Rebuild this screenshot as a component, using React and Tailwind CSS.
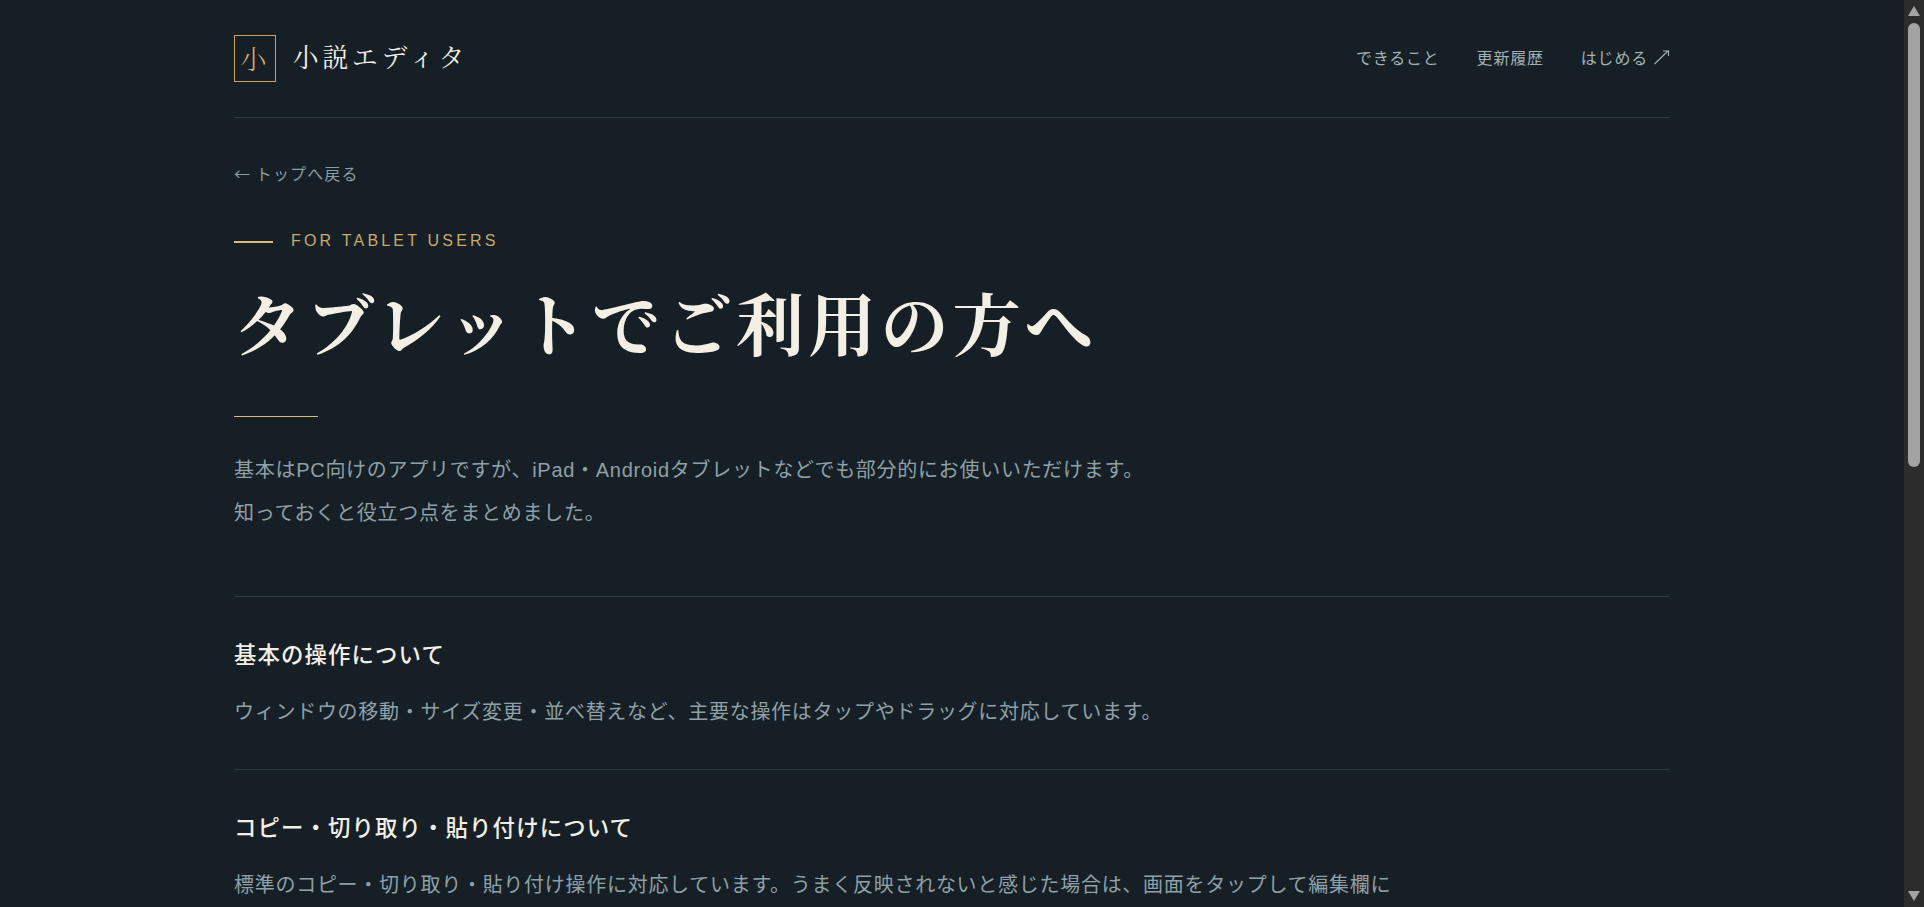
import React from 'react';

const sans = 'font-["Noto_Sans_CJK_JP","Noto_Sans_CJK_SC",sans-serif]';
const serif = 'font-["Noto_Serif_CJK_JP","Noto_Sans_CJK_JP",serif]';
const body = 'font-["Liberation_Sans","Noto_Sans_CJK_JP",sans-serif]';

const sections = [
  {
    title: '基本の操作について',
    body: 'ウィンドウの移動・サイズ変更・並べ替えなど、主要な操作はタップやドラッグに対応しています。',
  },
  {
    title: 'コピー・切り取り・貼り付けについて',
    body: '標準のコピー・切り取り・貼り付け操作に対応しています。うまく反映されないと感じた場合は、画面をタップして編集欄に',
  },
];

const Scrollbar = () => (
  <div className="w-5 shrink-0 h-full bg-[#2c2c2c] flex flex-col items-center pt-[6px] pb-[6px]">
    <div className="w-0 h-0 border-l-[6px] border-r-[6px] border-b-[10px] border-l-transparent border-r-transparent border-b-[#a3a3a3]" />
    <div className="w-3 h-[444px] mt-[7px] bg-[#a3a3a3] rounded-t-[6px] rounded-b-[6px]" />
    <div className="w-0 h-0 mt-auto border-l-[6px] border-r-[6px] border-t-[10px] border-l-transparent border-r-transparent border-t-[#a3a3a3]" />
  </div>
);

export default function App() {
  return (
    <div className={`h-screen overflow-hidden flex bg-[#161f26] ${sans}`}>
      <main className="flex-1 min-w-0 overflow-hidden px-[234px]">
        <header className="h-[118px] pt-[35px] border-b border-[#2f3d42] flex justify-between">
          <div className="flex h-[47px] items-center">
            <div className={`w-[42px] h-[47px] border border-[#c9a45c] flex items-center justify-center text-[#d8b06a] text-[26px] font-light pb-[3px] pr-[3px] ${serif}`}>小</div>
            <span className={`ml-[17px] pb-[5px] text-[25.6px] tracking-[0.155em] text-[#f2efe6] font-normal whitespace-nowrap ${serif}`}>小説エディタ</span>
          </div>
          <nav className="flex h-[47px] items-center gap-[37px] pb-[3px] text-[16px] tracking-[0.05em] text-[#a3b0b4] whitespace-nowrap">
            <a>できること</a>
            <a>更新履歴</a>
            <a className="flex items-center gap-[6px]">
              はじめる
              <svg width="16" height="16" viewBox="0 0 16 16" fill="none" stroke="currentColor" strokeWidth="1.1">
                <path d="M0.5 15 14.5 1.5M9 2h5.5v5" />
              </svg>
            </a>
          </nav>
        </header>

        <a className="block mt-[43px] text-[16px] leading-6 tracking-[0.07em] text-[#8b9ca3]">← トップへ戻る</a>

        <div className="flex items-center mt-[44px] h-6">
          <span className="w-[39px] h-[2px] mt-[2px] bg-[#d8bb7c]" />
          <span className='ml-[18px] font-["Liberation_Sans",sans-serif] text-[16px] tracking-[0.2em] text-[#c9a96a] whitespace-nowrap'>FOR TABLET USERS</span>
        </div>

        <h1 className={`mt-[27px] text-[68px] leading-[84px] tracking-[0.062em] font-bold text-[#f3efe4] whitespace-nowrap ${serif}`}>タブレットでご利用の方へ</h1>

        <div className="mt-[52px] w-[84px] h-px bg-[#d8bb7c]" />

        <p className={`mt-[32px] text-[20px] leading-[43px] text-[#8fa0a6] tracking-[0.036em] whitespace-nowrap ${body}`}>
          基本はPC向けのアプリですが、iPad・Androidタブレットなどでも部分的にお使いいただけます。
          <br />
          知っておくと役立つ点をまとめました。
        </p>

        <div className="mt-[61px]">
          {sections.map((s) => (
            <section key={s.title} className="border-t border-[#2f3d42] h-[173px] pt-[38px]">
              <h2 className="text-[22.4px] leading-[36px] font-medium tracking-[0.05em] text-[#f3efe4] whitespace-nowrap">{s.title}</h2>
              <p className={`mt-[23px] text-[20px] leading-[36px] tracking-[0.036em] text-[#8fa0a6] whitespace-nowrap ${body}`}>{s.body}</p>
            </section>
          ))}
        </div>
      </main>
      <Scrollbar />
    </div>
  );
}
